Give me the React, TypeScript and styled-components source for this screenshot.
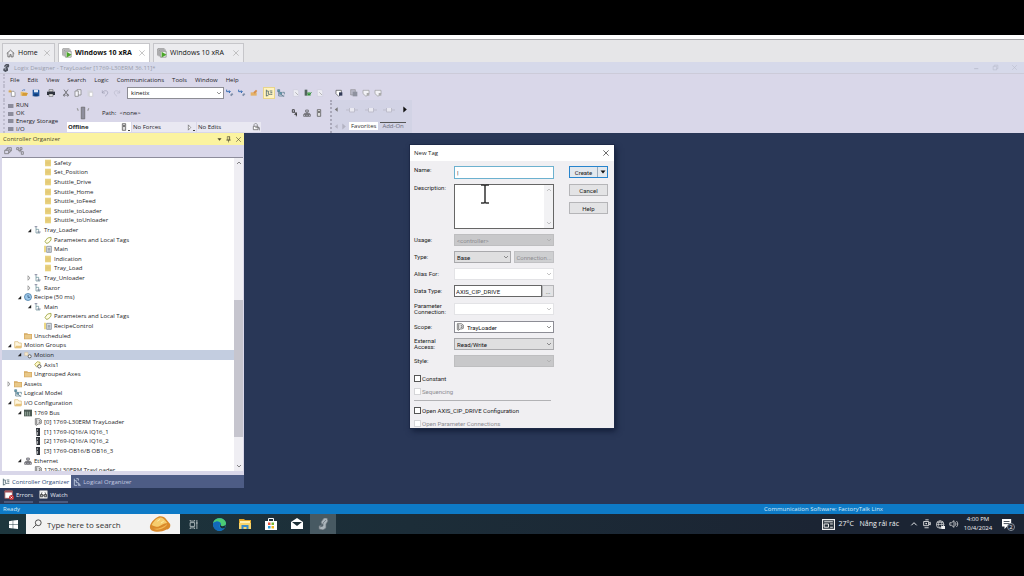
import React from 'react';
import styled, { createGlobalStyle, css } from 'styled-components';

const GlobalStyle = createGlobalStyle`
  *, *::before, *::after { box-sizing: border-box; }
  body { margin: 0; background: #000; }
  button, input, select, textarea { font: inherit; color: inherit; margin: 0; padding: 0; border: 0; border-radius: 0; outline: 0; }
  button { background: transparent; white-space: nowrap; }
  a { color: inherit; text-decoration: none; }
  svg { display: block; flex: none; }
  h1, h2, ul, p { margin: 0; padding: 0; font: inherit; list-style: none; }
`;

/* ---------- icons ---------- */

const icons: Record<string, React.ReactNode> = {
  home: <path d="M1 6 6 1.5 11 6M2.500 5v5.500h2.700V7.500h1.600v3h2.700V5" fill="none" stroke="#555" />,
  vm: <><path d="M1 9V1h8M2.500 10V2.500h8" fill="none" stroke="#777" /><path d="M4 4h7v7H4z" fill="#f4f4f4" stroke="#777" strokeWidth=".8" /><path d="m5.500 4.500 6 3.500-6 3.500z" fill="#4ba52a" /></>,
  close: <path d="m2 2 8 8M10 2l-8 8" fill="none" stroke="currentColor" />,
  app: <><path d="M6 0h4l1 3-2 3v4l-4 2-3-2V7l3-1-2-3z" fill="#4c515c" /><path d="M5 9V4l3-2M7 7l2-2" stroke="#b8bccb" fill="none" /></>,
  newFile: <><path d="M5 3.500h4l1.500 2V11H5z" fill="#fff" stroke="#666" strokeWidth=".8" /><path d="M3 1v5M.5 3.500h5M1.500 2l3 3M4.500 2l-3 3" stroke="#d89b2c" strokeWidth=".8" /></>,
  open: <><path d="M1 4h4l1 1h4v5H1z" fill="#e7bd6a" /><path d="m3 10 1-4h8l-2 4z" fill="#d49a36" /><path d="M3 3c1-2 3-2 4-1V.5" fill="none" stroke="#3568b5" /></>,
  save: <><path d="M1 1h9l1 1v9H1z" fill="#1d549c" /><path d="M3 1h6v4H3z" fill="#dfe9f6" /><path d="M3.500 7.500h5V11h-5z" fill="#123d78" /></>,
  print: <><path d="M3 1h6v3H3z" fill="#ddd" stroke="#333" strokeWidth=".7" /><path d="M0 4h12v5H0z" fill="#30343e" /><path d="M3 7.500h6V11H3z" fill="#eee" stroke="#333" strokeWidth=".7" /></>,
  cut: <><path d="m3 1 5 7M9 1 4 8" stroke="#444" fill="none" /><circle cx="3.500" cy="9.300" r="1.300" fill="none" stroke="#444" /><circle cx="8.500" cy="9.300" r="1.300" fill="none" stroke="#444" /></>,
  copy: <><path d="M4.500 1h6v8h-6z" fill="#f3f3fa" stroke="#777" /><path d="M1.500 3h5v8h-5z" fill="#f3f3fa" stroke="#777" /></>,
  paste: <><path d="M2 2h8v9H2z" fill="#d5d5de" /><path d="M5 5h5v6H5z" fill="#fff" stroke="#bbb" strokeWidth=".7" /></>,
  undo: <path d="M2 2v4h4M2 6c2-5 9-4 8 0 0 2-2 3-4 5" fill="none" stroke="#9b9bb0" />,
  redo: <path d="M10 2v4H6M10 6C8 1 1 2 2 6c0 2 2 3 4 5" fill="none" stroke="#b9b9cb" />,
  findNext: <><path d="M1 1v3h5M4.500 2 6.500 4l-2 2" fill="none" stroke="#235fae" strokeWidth="1.300" /><path d="m6 9 3-3 2 2-3 3z" fill="#7d8da6" /></>,
  findAll: <><path d="M1 5h9v5H1z" fill="#e4b167" /><path d="m5 5 4-4 2 2-4 4" fill="#d88e4a" /></>,
  org: <path d="M2 1v10M2 3h3v5h3M7 3h4M8 5.500h3M8 8h3M2 10h3" fill="none" stroke="#45606b" strokeWidth="1.200" />,
  logical: <><path d="M1 1h3v3H1zM4 5h3v3H4z" fill="#66a8b8" stroke="#31576b" strokeWidth=".7" /><path d="M2.500 4v6.500H11M6 8l4 3M8 5h3v3" fill="none" stroke="#456b7d" /></>,
  logicalLight: <path d="M2 1v10h4M2 4h3v3h3l3 4H8V8M5 1h3v3" fill="none" stroke="#c8d4e6" strokeWidth="1.200" />,
  pageFade: <><path d="M2 1h6l2 2v8H2z" fill="#ececf3" stroke="#c7c7d6" strokeWidth=".7" /><path d="m5 5 4 4" stroke="#999" /></>,
  verify: <><path d="M1 1h4v9H1z" fill="#52645d" /><path d="M5 5h5v5H5z" fill="#58a75a" /><path d="m5.500 7 2 2 4-4" stroke="#1c7b2e" fill="none" /></>,
  shield: <><path d="M1.500 2h8v5l-4 4-4-4z" fill="#fff" stroke="#444" /><path d="M6 5h5v5H6z" fill="#333b58" /></>,
  pages: <><path d="M1 1h7v8H1z" fill="#b9b9c7" stroke="#777" strokeWidth=".7" /><path d="M4 4h7v7H4z" fill="#8f929f" /></>,
  shieldFade: <><path d="M1.500 2h9v5L6 11 1.500 7z" fill="#f2f2f6" stroke="#999" /><path d="M7 6h4v4H7z" fill="#aaa" /></>,
  key: <><path d="M4.500 1h3v10h-3z" fill="#8e8e9d" stroke="#666" strokeWidth=".6" /><path d="m1 2 1 2M11 2l-1 2" stroke="#999" /></>,
  pointer: <path d="M2 1h3v4H2zM5 4l3 4M8 5v6M5 8h4" stroke="#333" strokeWidth="1.300" fill="none" />,
  network: <path d="M4 1.500h4v3H4zM1 8h3v3H1zM8 8h3v3H8zM6 4.500V7M2.500 8V6.500h7V8M4.500 8h3v3h-3z" fill="#ccd" stroke="#444" strokeWidth=".9" />,
  device: <><path d="M3.500 1h5v10h-5z" fill="#ddd" stroke="#444" /><path d="M5 3h2v3H5z" fill="#444" /></>,
  lock: <><path d="M3 5V3c0-3 5-3 5 0v2" fill="none" stroke="#777" /><path d="M2 5h7v5H2z" fill="#fff" stroke="#555" /><path d="M5 7h6v4" fill="none" stroke="#555" /></>,
  rung: <path d="M0 6h3M9 6h3M3.500 4v4h5V4" fill="#e9e9f1" stroke="#bdbdcb" />,
  left: <path d="m8 2-5 4 5 4z" fill="currentColor" />,
  right: <path d="m4 1 6 5-6 5z" fill="currentColor" />,
  down: <path d="m1 3 5 6 5-6z" fill="currentColor" />,
  chevron: <path d="m2 4 4 4 4-4" fill="none" stroke="currentColor" strokeWidth="1.400" />,
  chevronUp: <path d="m2 8 4-4 4 4" fill="none" stroke="currentColor" strokeWidth="1.400" />,
  pin: <path d="M4 1h4v6H4zM2 7h8M6 7v4M7.300 1v6" fill="none" stroke="currentColor" />,
  stack: <path d="M1 5h6v5H1zM3 5V3h6v5H7M5 3V1h6v5H9" fill="none" stroke="#666" />,
  tree: <path d="M1 1h3v3H1zM6 1h3v3H6zM8 7h3v4H8zM3 5.500h5M6 5v3" fill="none" stroke="#666" />,
  expanded: <path d="M10 2v8H2z" fill="#222" />,
  collapsed: <path d="m4 1.500 4 4.500-4 4.500z" fill="#fff" stroke="#555" />,
  ladder: <><path d="M1.500 1h9v10h-9z" fill="#f0dc8c" /><path d="M2 3h8M2 5h8M2 7h8M2 9h8" stroke="#d3b45c" strokeWidth=".8" /></>,
  ladderMain: <><path d="M0 1h3v10H0z" fill="#eed985" /><path d="M4 2h7v9H4z" fill="#e8edf3" stroke="#69727e" /><path d="M5.500 5h4M5.500 7h4M5.500 9h4" stroke="#69727e" /></>,
  program: <><path d="M3 1v9.500h6M3 5h4v5" fill="none" stroke="#5f8790" /><path d="M1 1h4M5 9h5" stroke="#557" /></>,
  tag: <path d="m1.500 8 4-5 5-1v4l-4 4.500-3 .5z" fill="#fffde7" stroke="#98a035" strokeWidth="1.200" />,
  clock: <><circle cx="6" cy="6" r="5.300" fill="#9cc6e8" stroke="#356e9c" /><path d="M6 3v3.500h3" fill="none" stroke="#234b75" /></>,
  folder: <><path d="M0 2h5l1 1h6v8H0z" fill="#d4a75e" /><path d="M1 4h10v6H1z" fill="#e8c889" /></>,
  folderOpen: <><path d="M1 1h5l1 2h4v7H1z" fill="#fff7df" stroke="#d8b673" /><path d="m1 11 2-4h9l-1.500 4z" fill="#e7c47e" /></>,
  motion: <><path d="M1 2h5v5H1z" fill="#f5e8cc" stroke="#d0b995" strokeWidth=".7" /><circle cx="8.500" cy="8" r="2.300" fill="#fff" stroke="#444" strokeWidth="1.200" /></>,
  axis: <><path d="m1 5 4-4 4 1v3L4 9z" fill="#fff9c6" stroke="#a29a2c" /><circle cx="8" cy="8" r="2.500" fill="#fff" stroke="#444" strokeWidth="1.200" /></>,
  bus: <><path d="M0 1h12v10H0z" fill="#4c5a54" /><path d="M2 4v6M5 4v6M8 4v6" stroke="#a9bfb1" strokeWidth="1.200" /></>,
  controller: <><path d="M2 1h6l3 2v5l-3 1H6l-2 2-2-1z" fill="#eee" stroke="#555" /><path d="M4 2v8M7 4h2v3H7" fill="none" stroke="#555" /></>,
  module: <><path d="M3 0h6v12H4z" fill="#30343a" /><path d="M5 2h1v2H5zM5 6h1v4H5z" fill="#eee" /></>,
  errors: <><path d="M1 1h9v9H1z" fill="#fff" stroke="#9a5454" /><path d="M1 1h9v2H1z" fill="#a8515a" /><circle cx="9" cy="9" r="3" fill="#c63135" /><path d="m7.800 7.800 2.400 2.400m0-2.400-2.400 2.400" stroke="#fff" strokeWidth=".8" /></>,
  watch: <><path d="M1 1h10v10H1z" fill="#fff" stroke="#bbb" /><path d="M2 6h3v3H2zM7 6h3v3H7zM5 7h2M3 6l1-3M9 6 8 3" fill="#aaa" stroke="#333" /></>,
  windows: <path d="m0 1.500 5-.7v4.900H0zM5.600.7 12 0v5.700H5.600zM0 6.300h5v4.900l-5-.7zM5.600 6.300H12V12l-6.400-.8z" fill="#fff" />,
  search: <><circle cx="7.500" cy="4.500" r="3.500" fill="none" stroke="#333" /><path d="M5 7 1 11" stroke="#333" /></>,
  pastry: <><path d="M1 15c0-4 5-9 9-11 3-1 7 0 9 3l4 5c1 3-1 6-4 6-5 3-12 3-16 1-2-1-2-3-2-4z" fill="#d98a2b" /><path d="M3 13c2-4 6-8 10-8 4 1 5 4 7 6-4 0-7 3-10 4-3 0-5-1-7-2z" fill="#f6cd6d" /><path d="M4 17c5 1 11-1 16-5-2 5-11 8-16 5z" fill="#f2b853" /><path d="M9 9 12 7M13 11l3-2" stroke="#fff0aa" /></>,
  taskView: <path d="M1.500 3.500h6v5h-6zM1.500 0v1.500h6V0M1.500 12v-1.500h6V12M10.500 0v12M9.500 4h2" fill="none" stroke="#e8eeee" strokeWidth=".9" />,
  edge: <><circle cx="6" cy="6" r="6" fill="#1688cf" /><path d="M0 5C1-2 12-1 12 5c0 3-4 4-5 2 2-4-4-5-7-2z" fill="#4cca74" /><path d="M0 5c3-3 7-2 7 1-3 0-1 5 3 4-4 4-10 1-10-5z" fill="#1368b9" /><path d="M7 5c-1 2 2 4 5 1l-1 3c-3 2-6-1-4-4z" fill="#1b3038" /></>,
  explorer: <><path d="M0 1h5l1 1h6v9H0z" fill="#e3a92b" /><path d="M1 3h10v4H1z" fill="#fff0b0" /><path d="M0 5h12v6H0z" fill="#f7d36a" /><path d="M2.500 7h7v4h-2V9h-3v2h-2z" fill="#398cca" /></>,
  store: <><path d="M0 3h12v9H0z" fill="#fff" /><path d="M3.500 3V.5h5V3" fill="none" stroke="#fff" /><path d="M3 4.500h2.500V7H3z" fill="#e65339" /><path d="M6.500 4.500H9V7H6.500z" fill="#77b832" /><path d="M3 8h2.500v2.500H3z" fill="#299fdd" /><path d="M6.500 8H9v2.500H6.500z" fill="#f2b61d" /></>,
  mail: <><path d="m0 4 6-4 6 4v7H0z" fill="#fff" /><path d="M1 4h10L6 8z" fill="#1c3038" /></>,
  rockwell: <path d="M7 0h3l1 3-2 3v4l-3 2-4-1V8l3-1-1-3zM3 9l3-1V5l3-3" fill="#aab4ba" stroke="#666f76" strokeWidth=".7" />,
  news: <><path d="M.5 1.500h11v9H.5z" fill="#242e38" stroke="#eee" /><path d="M2 3.500h8M2 5.500h4v3H2zM7.500 5.500H10M7.500 8.500H10" stroke="#eee" strokeWidth=".9" fill="none" /></>,
  meet: <><path d="M4 1h4M2 3h6v5H2zM8 5l2-1v3L8 6M3 10.500h5" fill="none" stroke="#eee" /><circle cx="5" cy="5.500" r="1" fill="#eee" /></>,
  globe: <><circle cx="5.500" cy="6" r="5" fill="none" stroke="#eee" /><path d="M.5 6h10M5.500 1c-3 3-3 7 0 10M5.500 1c3 3 3 7 0 10M1.500 3.500h8" fill="none" stroke="#eee" strokeWidth=".8" /><path d="M7 8h5v4H7z" fill="#eee" /></>,
  sound: <path d="M1 4.500h2L6 2v8L3 7.500H1zM7.500 4c1 1 1 3 0 4M9 2.500c2 2 2 5 0 7" fill="none" stroke="#eee" strokeWidth=".9" />,
  notice: <><path d="M0 0h11v9H6l-3 3V9H0z" fill="#fff" /><path d="M2 3h7M2 5.500h7" stroke="#27313d" /></>,
  min: <path d="M2 8h7" stroke="currentColor" strokeWidth="1.500" />,
  max: <path d="M2 4h6v6H2zM4 4V2h6v6H8" fill="none" stroke="currentColor" />,
};

const Icon = ({ name, size = 9, box = 12 }: { name: string; size?: number; box?: number }) => (
  <svg width={size} height={size} viewBox={`0 0 ${box} ${box}`} aria-hidden="true">{icons[name]}</svg>
);

/* ---------- page shell ---------- */

const Page = styled.div`
  display: flex;
  flex-direction: column;
  min-height: 100vh;
  padding: 35px 0 42px;
  background: #000;
  color: #1e1e28;
  font: 6px/8px "Open Sans", "Noto Sans", sans-serif;
  overflow: hidden;
`;

const TabStrip = styled.nav`
  display: flex;
  gap: 3px;
  height: 27px;
  padding-left: 2px;
  border-top: 4px solid #fff;
  background: #e6e6e8;
  box-shadow: inset 0 1px #a8a8ab;
`;

const VmTab = styled.div<{ $active?: boolean; $width: number }>`
  display: flex;
  align-items: center;
  gap: 3px;
  width: ${p => p.$width}px;
  margin-top: 4px;
  padding: 0 3px;
  border: 1px solid #c6c6ca;
  border-bottom: 0;
  background: ${p => (p.$active ? '#fff' : '#ececef')};
  font-size: 7px;
  font-weight: ${p => (p.$active ? 700 : 400)};
  color: #111;
  a { flex: 1; white-space: nowrap; }
  button { color: #aaa; }
`;

const TitleBar = styled.header`
  display: flex;
  align-items: center;
  justify-content: space-between;
  height: 12px;
  padding: 0 6px 0 2px;
  background: #d6d9ea;
  border-bottom: 1px solid #cccbd9;
  color: #9a9dab;
`;

const TitleText = styled.h1`
  display: flex;
  align-items: center;
  gap: 4px;
`;

const WindowButtons = styled.div`
  display: flex;
  gap: 12px;
  color: #b9bccb;
`;

const Chrome = styled.div`
  padding-left: 3px;
  background: #d9d7e9;
`;

const grip = css`
  border-left: 2px dotted #bfbdcf;
`;

const MenuBar = styled.nav`
  ${grip}
  display: flex;
  align-items: center;
  gap: 8px;
  height: 12px;
  padding-left: 5px;
`;

const Toolbar = styled.div`
  ${grip}
  display: flex;
  align-items: center;
  gap: 3px;
  height: 14px;
  padding-left: 1px;
`;

const ToolGroup = styled.div<{ $apart?: boolean }>`
  display: flex;
  align-items: center;
  margin-left: ${p => (p.$apart ? 4 : 0)}px;
`;

const ToolButton = styled.button<{ $on?: boolean }>`
  display: grid;
  place-items: center;
  width: 12px;
  height: 12px;
  ${p => p.$on && css`background: #fff3bf; box-shadow: inset 0 0 0 1px #e8d58c;`}
`;

const Combo = styled.span<{ $tone?: 'white' | 'grey' | 'off' }>`
  display: flex;
  align-items: center;
  min-width: 0;
  height: 12px;
  background: ${p => (p.$tone === 'grey' ? '#dfdfe0' : p.$tone === 'off' ? '#c8c8ca' : '#fff')};
  border: 1px solid ${p => (p.$tone === 'grey' ? '#a9a9ac' : p.$tone === 'off' ? '#bebec0' : '#8d8d95')};
  color: #111;
  select, input { flex: 1; width: 100%; min-width: 0; height: 100%; padding: 0 2px; background: transparent; appearance: none; }
  > svg { margin: 0 1px; color: #666; }
`;

const FindCombo = styled(Combo)`
  width: 97px;
  margin-left: 1px;
  padding-left: 1px;
`;

const StatusStrip = styled.div`
  ${grip}
  display: flex;
  height: 33px;
`;

const Leds = styled.ul`
  display: grid;
  grid-auto-rows: 1fr;
  width: 62px;
  padding: 2px 0 0 3px;
  li { display: flex; align-items: center; gap: 2px; line-height: 7px; }
  li::before { content: ""; width: 6px; height: 4px; background: #8b8b9b; border-right: 1px solid #b5b5c5; }
`;

const ModeArea = styled.div`
  display: flex;
  flex-direction: column;
  justify-content: space-between;
  width: 263px;
  padding-bottom: 1px;
`;

const PathRow = styled.div`
  display: flex;
  align-items: center;
  gap: 12px;
  height: 22px;
  padding: 3px 5px 0 9px;
  p { flex: 1; }
`;

const ModeRow = styled.div`
  display: flex;
  gap: 1px;
  height: 10px;
`;

const Mode = styled.button<{ $strong?: boolean }>`
  display: flex;
  align-items: center;
  justify-content: space-between;
  width: 64px;
  padding: 0 1px;
  background: ${p => (p.$strong ? '#fff' : '#e9e8f2')};
  font-weight: ${p => (p.$strong ? 700 : 400)};
`;

const ModeMark = styled.span`
  display: flex;
  align-items: flex-end;
  &::after { content: ""; width: 2px; height: 1px; background: #444; }
`;

const Instructions = styled.div`
  display: flex;
  flex-direction: column;
  justify-content: space-between;
  width: 82px;
  padding: 5px 4px 3px 1px;
  border-left: 2px dotted #a9a8b9;
  background: #d2d3e5;
`;

const InstrRow = styled.div`
  display: flex;
  align-items: center;
  justify-content: space-between;
  height: 9px;
  color: #111;
  button:first-child { color: #777; }
`;

const InstrTabs = styled.div`
  display: flex;
  align-items: center;
  color: #b3b3c2;
`;

const InstrTab = styled.button<{ $active?: boolean }>`
  margin-left: 2px;
  padding: 0 2px;
  border-top: 1px solid ${p => (p.$active ? '#fff' : '#555')};
  background: ${p => (p.$active ? '#fff' : 'transparent')};
  color: ${p => (p.$active ? '#333' : '#6d6d7b')};
  line-height: 7px;
`;

const Workspace = styled.main`
  position: relative;
  display: flex;
  flex: 1;
  min-height: 355px;
  background: #293757;
`;

/* ---------- controller organizer ---------- */

const Organizer = styled.aside`
  display: flex;
  flex-direction: column;
  width: 244px;
  height: 355px;
  background: #d9d7e9;
`;

const PanelTitle = styled.h2`
  display: flex;
  align-items: center;
  gap: 3px;
  height: 12px;
  padding: 0 2px 0 3px;
  background: #fbf3a0;
  color: #4c482f;
  span { flex: 1; }
`;

const PanelTools = styled.div`
  display: flex;
  align-items: center;
  height: 12px;
  padding-left: 2px;
`;

const TreeView = styled.div`
  display: flex;
  flex: 1;
  min-height: 0;
  margin: 0 1px 4px 2px;
  border-top: 1px solid #8d8c9b;
  background: #fff;
  overflow: hidden;
`;

const TreeList = styled.ul`
  display: grid;
  grid-template-rows: repeat(33, 1fr);
  flex: 1;
  height: 317px;
`;

const TreeRow = styled.li<{ $level: number; $selected?: boolean }>`
  display: flex;
  align-items: center;
  min-height: 0;
  padding-left: ${p => 3 + p.$level * 10}px;
  background: ${p => (p.$selected ? '#c3cde0' : 'transparent')};
  white-space: nowrap;
`;

const Twisty = styled.span`
  display: grid;
  place-items: center;
  width: 8px;
  margin-right: 1px;
`;

const NodeText = styled.span`
  margin-left: 2px;
`;

const ScrollBar = styled.div`
  display: flex;
  flex-direction: column;
  align-items: center;
  width: 9px;
  padding: 2px 0;
  background: #efeef3;
  color: #555;
`;

const Thumb = styled.div`
  width: 100%;
  height: 137px;
  margin-top: auto;
  margin-bottom: 26px;
  background: #c6c5ce;
`;

const OrganizerTabs = styled.div`
  display: flex;
  height: 13px;
  background: #4d5c85;
`;

const OrganizerTab = styled.button<{ $active?: boolean }>`
  display: flex;
  align-items: center;
  gap: 2px;
  padding: 0 2px;
  background: ${p => (p.$active ? '#fff' : 'transparent')};
  color: ${p => (p.$active ? '#2b4a75' : '#c3cbe0')};
`;

/* ---------- new tag dialog ---------- */

const Dialog = styled.section`
  position: absolute;
  left: 410px;
  top: 12px;
  width: 204px;
  background: #f0eff2;
  box-shadow: 0 0 0 1px #1d2947, 2px 3px 6px #111c36;
  color: #222;
  font: 6px/7px Roboto, "Liberation Sans", sans-serif;
`;

const DialogTitle = styled.header`
  display: flex;
  align-items: center;
  justify-content: space-between;
  height: 16px;
  padding: 0 4px;
  background: #fff;
  font-family: "Open Sans", "Noto Sans", sans-serif;
`;

const DialogBody = styled.form`
  display: flex;
  justify-content: space-between;
  padding: 5px 6px 0 4px;
`;

const Fields = styled.div`
  display: grid;
  grid-template-columns: 40px 100px;
  row-gap: 5px;
`;

const FieldLabel = styled.label<{ $top?: boolean }>`
  align-self: ${p => (p.$top ? 'start' : 'center')};
  padding-top: ${p => (p.$top ? 1 : 0)}px;
  line-height: 6px;
`;

const NameInput = styled.input`
  height: 13px;
  padding: 0 2px;
  background: #fff;
  border: 1px solid #6cb1cf;
`;

const DescriptionBox = styled.div`
  display: flex;
  height: 45px;
  background: #fff;
  border: 1px solid #666;
  textarea { flex: 1; min-width: 0; resize: none; background: transparent; overflow: hidden; }
`;

const DescriptionScroll = styled.span`
  display: flex;
  flex-direction: column;
  justify-content: space-between;
  align-items: center;
  width: 9px;
  padding: 2px 0;
  background: #f2f2f4;
  color: #aaa;
`;

const SplitField = styled.div<{ $columns: string; $gap: number }>`
  display: grid;
  grid-template-columns: ${p => p.$columns};
  gap: ${p => p.$gap}px;
`;

const PlainInput = styled.input`
  min-width: 0;
  height: 12px;
  padding: 0 1px;
  border: 1px solid #666;
  background: #fff;
`;

const TallRow = styled.div`
  display: flex;
  align-items: center;
  height: 14px;
  > span { flex: 1; }
`;

const FaintCombo = styled(Combo)`
  border-color: ${p => (p.$tone === 'off' ? '#bebec0' : '#e3e3e6')};
  color: #8e8e92;
  > svg { color: #aaa; }
  select:disabled { opacity: 1; color: #8e8e92; }
`;

const PushButton = styled.button`
  height: 12px;
  border: 1px solid #b5b5b8;
  background: #e3e3e5;
  &:disabled { background: #cecfd1; border-color: #c1c1c4; color: #8e8e92; }
`;

const Actions = styled.div`
  display: flex;
  flex-direction: column;
  gap: 6px;
  width: 39px;
`;

const CreateButton = styled.div`
  display: flex;
  height: 12px;
  border: 1px solid #2784cd;
  background: #e3e8ee;
  button:first-child { flex: 1; border-right: 1px solid #9ab; }
  button:last-child { display: grid; place-items: center; width: 9px; color: #111; }
`;

const Checks = styled.div`
  display: flex;
  flex-direction: column;
  gap: 5px;
  padding: 7px 4px 1px;
  hr { width: 137px; margin: 0; border: 0; border-top: 1px solid #b2b2b5; }
`;

const Check = styled.label<{ $off?: boolean }>`
  display: flex;
  align-items: center;
  gap: 1px;
  height: 8px;
  color: ${p => (p.$off ? '#8e8e92' : '#222')};
  input { appearance: none; width: 7px; height: 7px; background: #fff; border: 1px solid ${p => (p.$off ? '#d5d5d8' : '#555')}; }
`;

const MouseBeam = styled.svg`
  position: absolute;
  left: 70px;
  top: 39px;
  pointer-events: none;
`;

/* ---------- bottom bars ---------- */

const DockBar = styled.div`
  display: flex;
  gap: 6px;
  height: 16px;
  padding: 0 4px;
  background: #293757;
  color: #e3e7f1;
  button { display: flex; align-items: center; gap: 2px; height: 15px; border-bottom: 2px solid #4b5a7e; }
`;

const ReadyBar = styled.footer`
  display: flex;
  align-items: center;
  justify-content: space-between;
  height: 10px;
  padding: 0 141px 0 3px;
  background: #0e7ac6;
  color: #d7ebfa;
`;

const TaskBar = styled.nav`
  display: flex;
  align-items: center;
  height: 20px;
  background: linear-gradient(90deg, #1d363d, #1b2433 80%);
  color: #f1f3f5;
  font-size: 7px;
`;

const TaskButton = styled.button<{ $active?: boolean }>`
  display: grid;
  place-items: center;
  width: 26px;
  height: 20px;
  background: ${p => (p.$active ? '#475962' : 'transparent')};
`;

const SearchBox = styled.label`
  display: flex;
  align-items: center;
  gap: 5px;
  width: 154px;
  height: 20px;
  padding: 0 9px 0 6px;
  background: #f2f2f2;
  color: #333;
  font-size: 8px;
  input { flex: 1; min-width: 0; background: transparent; }
  input::placeholder { color: #333; opacity: 1; }
`;

const Tray = styled.div`
  display: flex;
  align-items: center;
  gap: 4px;
  margin-left: auto;
  padding-right: 12px;
`;

const Weather = styled.span`
  margin-right: 7px;
  white-space: pre;
`;

const Clock = styled.time`
  width: 30px;
  font-size: 6px;
  line-height: 9px;
  text-align: center;
`;

const Notice = styled.button`
  position: relative;
  margin-left: 5px;
  span { position: absolute; left: 5px; top: 4px; width: 8px; height: 8px; border-radius: 4px; background: #1b2433; border: 1px solid #8a929c; font-size: 6px; line-height: 6px; text-align: center; }
`;

/* ---------- data ---------- */

type Node = [level: number, icon: string, text: string, twisty?: 'expanded' | 'collapsed'];

const nodes: Node[] = [
  [3, 'ladder', 'Safety'],
  [3, 'ladder', 'Set_Position'],
  [3, 'ladder', 'Shuttle_Drive'],
  [3, 'ladder', 'Shuttle_Home'],
  [3, 'ladder', 'Shuttle_toFeed'],
  [3, 'ladder', 'Shuttle_toLoader'],
  [3, 'ladder', 'Shuttle_toUnloader'],
  [2, 'program', 'Tray_Loader', 'expanded'],
  [3, 'tag', 'Parameters and Local Tags'],
  [3, 'ladderMain', 'Main'],
  [3, 'ladder', 'Indication'],
  [3, 'ladder', 'Tray_Load'],
  [2, 'program', 'Tray_Unloader', 'collapsed'],
  [2, 'program', 'Razor', 'collapsed'],
  [1, 'clock', 'Recipe (50 ms)', 'expanded'],
  [2, 'program', 'Main', 'expanded'],
  [3, 'tag', 'Parameters and Local Tags'],
  [3, 'ladderMain', 'RecipeControl'],
  [1, 'folder', 'Unscheduled'],
  [0, 'folderOpen', 'Motion Groups', 'expanded'],
  [1, 'motion', 'Motion', 'expanded'],
  [2, 'axis', 'Axis1'],
  [1, 'folder', 'Ungrouped Axes'],
  [0, 'folder', 'Assets', 'collapsed'],
  [0, 'logical', 'Logical Model'],
  [0, 'folderOpen', 'I/O Configuration', 'expanded'],
  [1, 'bus', '1769 Bus', 'expanded'],
  [2, 'controller', '[0] 1769-L30ERM TrayLoader'],
  [2, 'module', '[1] 1769-IQ16/A IQ16_1'],
  [2, 'module', '[2] 1769-IQ16/A IQ16_2'],
  [2, 'module', '[3] 1769-OB16/B OB16_3'],
  [1, 'network', 'Ethernet', 'expanded'],
  [2, 'controller', '1769-L30ERM TrayLoader'],
];

const menus = ['File', 'Edit', 'View', 'Search', 'Logic', 'Communications', 'Tools', 'Window', 'Help'];

const Tools = ({ names, on, apart }: { names: string[]; on?: string; apart?: boolean }) => (
  <ToolGroup $apart={apart}>
    {names.map((n, i) => (
      <ToolButton key={i} type="button" aria-label={n} $on={n === on}><Icon name={n} size={8} /></ToolButton>
    ))}
  </ToolGroup>
);

const NewTagDialog = () => (
  <Dialog role="dialog" aria-labelledby="dialog-title">
    <DialogTitle>
      <span id="dialog-title">New Tag</span>
      <button type="button" aria-label="Close"><Icon name="close" size={8} /></button>
    </DialogTitle>
    <DialogBody>
      <Fields>
        <FieldLabel $top htmlFor="name">Name:</FieldLabel>
        <NameInput id="name" defaultValue="|" />
        <FieldLabel $top htmlFor="description">Description:</FieldLabel>
        <DescriptionBox>
          <textarea id="description" />
          <DescriptionScroll><Icon name="chevronUp" size={6} /><Icon name="chevron" size={6} /></DescriptionScroll>
        </DescriptionBox>
        <FieldLabel htmlFor="usage">Usage:</FieldLabel>
        <FaintCombo $tone="off">
          <select id="usage" disabled><option>&lt;controller&gt;</option></select><Icon name="chevron" size={6} />
        </FaintCombo>
        <FieldLabel htmlFor="type">Type:</FieldLabel>
        <SplitField $columns="57px 1fr" $gap={3}>
          <Combo $tone="grey"><select id="type"><option>Base</option></select><Icon name="chevron" size={6} /></Combo>
          <PushButton type="button" disabled>Connection...</PushButton>
        </SplitField>
        <FieldLabel htmlFor="alias">Alias For:</FieldLabel>
        <FaintCombo><select id="alias" /><Icon name="chevron" size={6} /></FaintCombo>
        <FieldLabel htmlFor="datatype">Data Type:</FieldLabel>
        <SplitField $columns="1fr 12px" $gap={0}>
          <PlainInput id="datatype" defaultValue="AXIS_CIP_DRIVE" />
          <PushButton type="button">...</PushButton>
        </SplitField>
        <FieldLabel htmlFor="connection">Parameter Connection:</FieldLabel>
        <TallRow><FaintCombo><select id="connection" /><Icon name="chevron" size={6} /></FaintCombo></TallRow>
        <FieldLabel htmlFor="scope">Scope:</FieldLabel>
        <Combo><Icon name="controller" size={8} /><select id="scope"><option>TrayLoader</option></select><Icon name="chevron" size={6} /></Combo>
        <FieldLabel htmlFor="access">External Access:</FieldLabel>
        <Combo $tone="grey"><select id="access"><option>Read/Write</option></select><Icon name="chevron" size={6} /></Combo>
        <FieldLabel htmlFor="style">Style:</FieldLabel>
        <FaintCombo $tone="off"><select id="style" disabled /><Icon name="chevron" size={6} /></FaintCombo>
      </Fields>
      <Actions>
        <CreateButton>
          <button type="button">Create</button>
          <button type="button" aria-label="More create options"><Icon name="down" size={6} /></button>
        </CreateButton>
        <PushButton type="button">Cancel</PushButton>
        <PushButton type="button">Help</PushButton>
      </Actions>
    </DialogBody>
    <Checks>
      <Check><input type="checkbox" />Constant</Check>
      <Check $off><input type="checkbox" disabled />Sequencing</Check>
      <hr />
      <Check><input type="checkbox" />Open AXIS_CIP_DRIVE Configuration</Check>
      <Check $off><input type="checkbox" disabled />Open Parameter Connections</Check>
    </Checks>
    <MouseBeam width="10" height="20" viewBox="0 0 10 20" aria-hidden="true">
      <path d="M1 1h3l1 1 1-1h3M5 2v16M1 19h3l1-1 1 1h3" fill="none" stroke="#333" strokeWidth="1.500" />
    </MouseBeam>
  </Dialog>
);

export default function App() {
  return (
    <Page>
      <GlobalStyle />
      <TabStrip>
        <VmTab $width={53}><Icon name="home" /><a href="#home">Home</a><button aria-label="Close tab"><Icon name="close" size={8} /></button></VmTab>
        <VmTab $width={92} $active><Icon name="vm" size={10} /><a href="#vm1">Windows 10 xRA</a><button aria-label="Close tab"><Icon name="close" size={8} /></button></VmTab>
        <VmTab $width={91}><Icon name="vm" size={10} /><a href="#vm2">Windows 10 xRA</a><button aria-label="Close tab"><Icon name="close" size={8} /></button></VmTab>
      </TabStrip>
      <TitleBar>
        <TitleText><Icon name="app" size={8} />Logix Designer - TrayLoader [1769-L30ERM 36.11]*</TitleText>
        <WindowButtons>
          <button aria-label="Minimize"><Icon name="min" size={7} /></button>
          <button aria-label="Restore"><Icon name="max" size={7} /></button>
          <button aria-label="Close"><Icon name="close" size={7} /></button>
        </WindowButtons>
      </TitleBar>
      <Chrome>
        <MenuBar>{menus.map(m => <button key={m}>{m}</button>)}</MenuBar>
        <Toolbar>
          <Tools names={['newFile', 'open', 'save']} />
          <Tools names={['print']} />
          <Tools names={['cut', 'copy', 'paste']} />
          <Tools names={['undo', 'redo']} />
          <ToolGroup>
            <FindCombo><input aria-label="Find" defaultValue="kinetix" /><Icon name="chevron" size={6} /></FindCombo>
            <Tools names={['findNext', 'findNext', 'findAll']} />
          </ToolGroup>
          <Tools names={['org', 'logical']} on="org" />
          <Tools names={['pageFade', 'verify', 'pageFade']} />
          <Tools names={['shield']} apart />
          <Tools names={['pages', 'shieldFade', 'shieldFade']} />
        </Toolbar>
        <StatusStrip>
          <Leds><li>RUN</li><li>OK</li><li>Energy Storage</li><li>I/O</li></Leds>
          <ModeArea>
            <PathRow>
              <Icon name="key" size={14} />
              <p>Path: &nbsp;&lt;none&gt;</p>
              <Tools names={['pointer', 'network', 'device']} />
            </PathRow>
            <ModeRow>
              <Mode $strong>Offline<ModeMark><Icon name="device" size={8} /></ModeMark></Mode>
              <Mode>No Forces<ModeMark><Icon name="collapsed" size={7} /></ModeMark></Mode>
              <Mode>No Edits<Icon name="lock" size={8} /></Mode>
            </ModeRow>
          </ModeArea>
          <Instructions>
            <InstrRow>
              <button aria-label="Scroll left"><Icon name="left" size={7} /></button>
              <Icon name="rung" size={12} /><Icon name="rung" size={12} /><Icon name="rung" size={12} />
              <button aria-label="Scroll right"><Icon name="right" size={7} /></button>
            </InstrRow>
            <InstrTabs>
              <Icon name="left" size={7} /><Icon name="right" size={7} />
              <InstrTab $active>Favorites</InstrTab><InstrTab>Add-On</InstrTab>
            </InstrTabs>
          </Instructions>
        </StatusStrip>
      </Chrome>
      <Workspace>
        <Organizer>
          <PanelTitle>
            <span>Controller Organizer</span>
            <button aria-label="Options"><Icon name="down" size={5} /></button>
            <button aria-label="Pin"><Icon name="pin" size={7} /></button>
            <button aria-label="Close"><Icon name="close" size={7} /></button>
          </PanelTitle>
          <PanelTools><Tools names={['stack', 'tree']} /></PanelTools>
          <TreeView>
            <TreeList>
              {nodes.map(([level, icon, text, twisty], i) => (
                <TreeRow key={i} $level={level} $selected={text === 'Motion'}>
                  <Twisty>{twisty && <Icon name={twisty} size={twisty === 'expanded' ? 5 : 6} />}</Twisty>
                  <Icon name={icon} size={8} />
                  <NodeText>{text}</NodeText>
                </TreeRow>
              ))}
            </TreeList>
            <ScrollBar><Icon name="chevronUp" size={6} /><Thumb /><Icon name="chevron" size={6} /></ScrollBar>
          </TreeView>
          <OrganizerTabs>
            <OrganizerTab $active><Icon name="org" size={8} />Controller Organizer</OrganizerTab>
            <OrganizerTab><Icon name="logicalLight" size={8} />Logical Organizer</OrganizerTab>
          </OrganizerTabs>
        </Organizer>
        <NewTagDialog />
      </Workspace>
      <DockBar>
        <button><Icon name="errors" size={10} />Errors</button>
        <button><Icon name="watch" size={9} />Watch</button>
      </DockBar>
      <ReadyBar><span>Ready</span><span>Communication Software: FactoryTalk Linx</span></ReadyBar>
      <TaskBar>
        <TaskButton aria-label="Start"><Icon name="windows" size={9} /></TaskButton>
        <SearchBox>
          <Icon name="search" size={10} />
          <input placeholder="Type here to search" aria-label="Search" />
          <Icon name="pastry" size={22} box={24} />
        </SearchBox>
        <TaskButton aria-label="Task view"><Icon name="taskView" size={9} /></TaskButton>
        <TaskButton aria-label="Edge"><Icon name="edge" size={13} /></TaskButton>
        <TaskButton aria-label="File Explorer"><Icon name="explorer" size={12} /></TaskButton>
        <TaskButton aria-label="Store"><Icon name="store" size={12} /></TaskButton>
        <TaskButton aria-label="Mail"><Icon name="mail" size={12} /></TaskButton>
        <TaskButton aria-label="Logix Designer" $active><Icon name="rockwell" size={12} /></TaskButton>
        <Tray>
          <Icon name="news" size={13} />
          <Weather>27°C   Nắng rải rác</Weather>
          <Icon name="chevronUp" size={8} />
          <Icon name="meet" size={10} />
          <Icon name="globe" size={9} />
          <Icon name="sound" size={10} />
          <Clock>4:00 PM<br />10/4/2024</Clock>
          <Notice aria-label="Notifications"><Icon name="notice" size={10} /><span>2</span></Notice>
        </Tray>
      </TaskBar>
    </Page>
  );
}
